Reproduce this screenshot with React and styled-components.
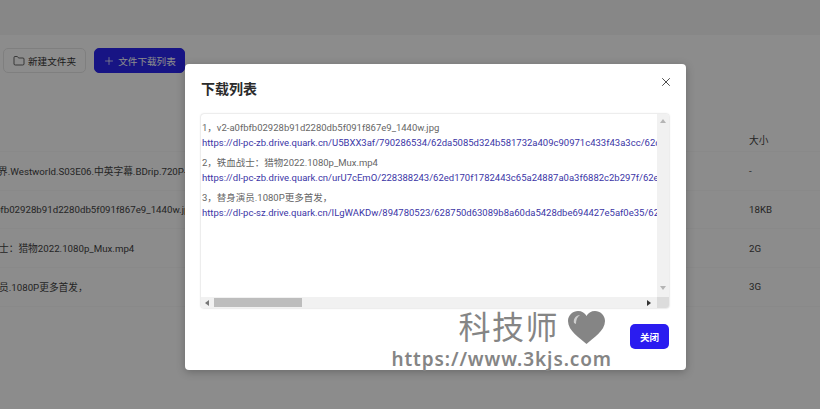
import React from "react";
import styled, { createGlobalStyle } from "styled-components";
import { X, Folder, Plus } from "lucide-react";

const Global = createGlobalStyle`
  html, body { margin: 0; padding: 0; background: #fff; }
  body { font-family: Roboto, "Noto Sans CJK SC", sans-serif; }
`;
const Page = styled.div`
  position: relative; width: 820px; height: 409px; overflow: hidden; background: #fff;
`;
const TopBand = styled.div`height: 35px; background: #f6f6f6;`;
const Toolbar = styled.div`display: flex; gap: 8px; padding: 13px 0 0 3px; height: 94px; box-sizing: border-box;`;
const ToolButton = styled.div`
  display: flex; align-items: center; justify-content: center; gap: 3px; height: 25px; width: ${p => p.$w}px;
  box-sizing: border-box; border-radius: 5px; font-size: 9.6px;
  background: ${p => p.$primary ? "#2a26f0" : "#fff"};
  color: ${p => p.$primary ? "#fff" : "#333"};
  border: 1px solid ${p => p.$primary ? "#2a26f0" : "#e8e8e8"};
`;
const Table = styled.div`font-size: 9.7px; color: #444;`;
const Row = styled.div`
  display: grid; grid-template-columns: 749px 60px; align-items: center; box-sizing: border-box;
  height: ${p => p.$h}px; border-bottom: 1px solid #f9f9f9; white-space: nowrap; overflow: hidden;
`;
const Name = styled.span`margin-left: ${p => p.$shift}px; min-width: 0; overflow: hidden;`;
const Overlay = styled.div`
  position: absolute; inset: 0; background: rgba(0,0,0,.45); padding: 64px 0 0 185px; box-sizing: border-box;
`;
const Modal = styled.div`
  position: relative; width: 501px; height: 306px; background: #fff; border-radius: 4px; box-sizing: border-box;
  padding: 16px 17px 21px 16px; display: flex; flex-direction: column;
  box-shadow: 0 2px 8px rgba(0,0,0,.25);
`;
const Header = styled.div`display: flex; justify-content: space-between; align-items: flex-start; height: 34px;`;
const Title = styled.h3`margin: 0; font-size: 14px; line-height: 18px; font-weight: 700; color: #2b2b2b;`;
const Close = styled.div`display: flex; color: #333; margin: -5px -4px 0 0;`;
const ListBox = styled.div`
  display: grid; grid-template-columns: 456px 12px; grid-template-rows: 183px 11px; width: 468px; height: 194px;
  border-radius: 3px; box-shadow: 0 0 2px rgba(0,0,0,.28); overflow: hidden;
`;
const Content = styled.div`overflow: hidden; padding: 6px 0 0 1px; white-space: nowrap; font-size: 9.5px;`;
const Item = styled.div`margin-bottom: 5px;`;
const FileName = styled.div`color: #666; line-height: 15px; height: 15px;`;
const Link = styled.div`color: #3b35a6; line-height: 15px; height: 15px;`;
const VBar = styled.div`
  background: #f1f1f1; display: flex; flex-direction: column; justify-content: space-between; align-items: center; padding: 4px 0 6px;
`;
const HBar = styled.div`background: #f1f1f1; display: flex; align-items: center; justify-content: space-between; padding: 0 5px 0 3px;`;
const HLeft = styled.div`display: flex; align-items: center;`;
const Thumb = styled.div`width: 88px; height: 9px; background: #bdbdbd; margin-left: 4px;`;
const Corner = styled.div`background: #dcdcdc;`;
const Arrow = styled.svg`width: 6px; height: 6px; fill: ${p => p.$c};`;
const Footer = styled.div`display: flex; justify-content: flex-end; margin-top: 16px;`;
const CloseButton = styled.div`
  width: 39px; height: 25px; border-radius: 5px; background: #2a1cf0; color: #fff; font-size: 9.5px; font-weight: 700;
  display: flex; align-items: center; justify-content: center;
`;
const Watermark = styled.div`
  position: absolute; left: 207px; top: 243px; width: 220px; color: #858585; display: flex; flex-direction: column; align-items: flex-end;
`;
const MarkTop = styled.div`display: flex; align-items: center; gap: 9px; height: 41px; margin-right: 7px;`;
const MarkCn = styled.span`font-size: 32px; line-height: 38px; letter-spacing: 1.5px; font-weight: 400;`;
const MarkUrl = styled.span`font-size: 19px; line-height: 22px; font-weight: 600; letter-spacing: .9px; font-family: "Noto Sans", sans-serif; white-space: nowrap;`;

const rows = [
  ["西部世界.Westworld.S03E06.中英字幕.BDrip.720P-人人影视.mkv", -31, "-"],
  ["v2-a0fbfb02928b91d2280db5f091f867e9_1440w.jpg", -32, "18KB"],
  ["铁血战士：猎物2022.1080p_Mux.mp4", -30, "2G"],
  ["替身演员.1080P更多首发，", -30, "3G"],
];
const items = [
  ["1，v2-a0fbfb02928b91d2280db5f091f867e9_1440w.jpg", "https://dl-pc-zb.drive.quark.cn/U5BXX3af/790286534/62da5085d324b581732a409c90971c433f43a3cc/62da5085a1b2c3d4e5f6"],
  ["2，铁血战士：猎物2022.1080p_Mux.mp4", "https://dl-pc-zb.drive.quark.cn/urU7cEmO/228388243/62ed170f1782443c65a24887a0a3f6882c2b297f/62ed170fa1b2c3d4e5f6"],
  ["3，替身演员.1080P更多首发，", "https://dl-pc-sz.drive.quark.cn/ILgWAKDw/894780523/628750d63089b8a60da5428dbe694427e5af0e35/628750d6a1b2c3d4e5f6"],
];

export default function App() {
  return (
    <Page>
      <Global />
      <TopBand />
      <Toolbar>
        <ToolButton $w={83}><Folder size={12} strokeWidth={1.5} />新建文件夹</ToolButton>
        <ToolButton $w={91} $primary><Plus size={12} strokeWidth={1.5} />文件下载列表</ToolButton>
      </Toolbar>
      <Table>
        <Row $h={23}><span /><span>大小</span></Row>
        {rows.map(r => (
          <Row key={r[0]} $h={38.7}><Name $shift={r[1]}>{r[0]}</Name><span>{r[2]}</span></Row>
        ))}
      </Table>
      <Overlay>
        <Modal>
          <Header>
            <Title>下载列表</Title>
            <Close><X size={14} strokeWidth={1.5} /></Close>
          </Header>
          <ListBox>
            <Content>
              {items.map(i => (
                <Item key={i[0]}><FileName>{i[0]}</FileName><Link>{i[1]}</Link></Item>
              ))}
            </Content>
            <VBar>
              <Arrow $c="#b5b5b5" viewBox="0 0 6 6"><path d="M3 1 L6 5 L0 5 Z" /></Arrow>
              <Arrow $c="#b5b5b5" viewBox="0 0 6 6"><path d="M3 5 L6 1 L0 1 Z" /></Arrow>
            </VBar>
            <HBar>
              <HLeft>
                <Arrow $c="#777" viewBox="0 0 6 6"><path d="M1 3 L5 0 L5 6 Z" /></Arrow>
                <Thumb />
              </HLeft>
              <Arrow $c="#333" viewBox="0 0 6 6"><path d="M5 3 L1 0 L1 6 Z" /></Arrow>
            </HBar>
            <Corner />
          </ListBox>
          <Footer><CloseButton>关闭</CloseButton></Footer>
          <Watermark>
            <MarkTop>
              <MarkCn>科技师</MarkCn>
              <svg width="37" height="33" viewBox="0 0 37 33" fill="#858585">
                <path d="M18.5 33 C12 27 0 20 0 10 C0 4 5 0 10 0 C14 0 17 2 18.5 5 C20 2 23 0 27 0 C32 0 37 4 37 10 C37 20 25 27 18.5 33 Z" />
                <path d="M6 12 C5 8 8 4 12 4 C9 6 8 9 8 13 Z" fill="#fff" opacity=".6" />
              </svg>
            </MarkTop>
            <MarkUrl>https://www.3kjs.com</MarkUrl>
          </Watermark>
        </Modal>
      </Overlay>
    </Page>
  );
}
